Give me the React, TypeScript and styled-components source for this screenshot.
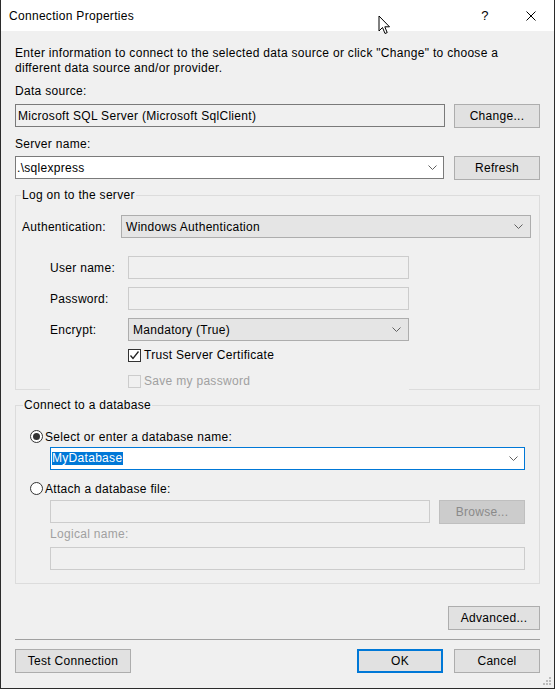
import styled, { createGlobalStyle } from "styled-components";

const font = `"Liberation Sans", Arial, sans-serif`;

const GlobalStyle = createGlobalStyle`
  html, body {
    margin: 0;
    padding: 0;
    background: #f0f0f0;
  }
  * {
    box-sizing: border-box;
  }
`;

const Window = styled.div`
  position: relative;
  width: 555px;
  height: 689px;
  display: flex;
  flex-direction: column;
  border: 1px solid #2b2b2b;
  border-top: 0;
  background: #f0f0f0;
  font-family: ${font};
  font-size: 12px;
  letter-spacing: 0.3px;
  color: #000;
  overflow: hidden;
`;

const TitleBar = styled.div`
  height: 31px;
  flex: none;
  display: flex;
  align-items: center;
  background: #fff;
`;

const Title = styled.div`
  flex: 1;
  padding-left: 8px;
  font-size: 12px;
`;

const TitleButton = styled.div`
  width: 46px;
  height: 31px;
  display: flex;
  align-items: center;
  justify-content: center;
  font-size: 13px;
`;

const Body = styled.div`
  flex: 1;
  display: flex;
  flex-direction: column;
  padding: 0 14px;
`;

const Intro = styled.p`
  margin: 15px 0 0;
  line-height: 15px;
`;

const Label = styled.div<{ $mt?: number; $disabled?: boolean }>`
  margin-top: ${(p) => p.$mt ?? 0}px;
  line-height: 15px;
  color: ${(p) => (p.$disabled ? "#a0a0a0" : "#000")};
`;

const Row = styled.div<{ $mt?: number; $gap?: number }>`
  display: flex;
  align-items: flex-start;
  gap: ${(p) => p.$gap ?? 9}px;
  margin-top: ${(p) => p.$mt ?? 0}px;
`;

const Box = styled.div<{ $bg?: string; $border?: string; $w?: number; $pl?: number }>`
  position: relative;
  height: 23px;
  ${(p) => (p.$w ? `width: ${p.$w}px; flex: none;` : "flex: 1;")}
  display: flex;
  align-items: center;
  padding-left: ${(p) => p.$pl ?? 2}px;
  background: ${(p) => p.$bg ?? "#fff"};
  border: 1px solid ${(p) => p.$border ?? "#7a7a7a"};
  white-space: nowrap;
`;

const ChevronSlot = styled.span<{ $right: number }>`
  position: absolute;
  right: ${(p) => p.$right}px;
  top: 8px;
  display: flex;
`;

const Selected = styled.span`
  background: #0078d7;
  color: #fff;
  line-height: 13px;
  padding: 0 1px 0 0;
`;

const Button = styled.button<{ $w: number; $primary?: boolean }>`
  width: ${(p) => p.$w}px;
  height: 24px;
  flex: none;
  padding: 0;
  font-family: ${font};
  font-size: 12px;
  letter-spacing: 0.3px;
  color: #000;
  background: #e1e1e1;
  border: ${(p) => (p.$primary ? "2px solid #0078d7" : "1px solid #adadad")};
  &:disabled {
    background: #cccccc;
    border-color: #bfbfbf;
    color: #8a8a8a;
  }
`;

const Group = styled.fieldset<{ $mt: number; $pb?: number }>`
  margin: ${(p) => p.$mt}px 0 0;
  padding: 0 0 ${(p) => p.$pb ?? 0}px;
  border: 1px solid #dcdcdc;
  min-width: 0;
`;

const Legend = styled.legend<{ $indent: number }>`
  margin-left: ${(p) => p.$indent}px;
  padding: 0 1px;
  line-height: 15px;
`;

const AuthRow = styled.div`
  display: flex;
  align-items: center;
  margin-top: 12px;
  padding: 0 8px 0 6px;
`;

const AuthLabel = styled.div`
  width: 99px;
  flex: none;
`;

const CredPanel = styled.div`
  position: relative;
  z-index: 1;
  width: 359px;
  margin: 18px 0 -1px 34px;
  padding-bottom: 1px;
  background: #f0f0f0;
`;

const CredRow = styled.div`
  display: flex;
  align-items: center;
  height: 23px;
  & + & {
    margin-top: 8px;
  }
`;

const CredLabel = styled.div`
  width: 78px;
  flex: none;
`;

const CheckRow = styled.div<{ $mt: number; $disabled?: boolean }>`
  display: flex;
  align-items: center;
  gap: 3px;
  margin: ${(p) => p.$mt}px 0 0 78px;
  line-height: 15px;
  color: ${(p) => (p.$disabled ? "#a0a0a0" : "#000")};
`;

const CheckBox = styled.span<{ $disabled?: boolean }>`
  width: 13px;
  height: 13px;
  flex: none;
  display: flex;
  align-items: center;
  justify-content: center;
  border: 1px solid ${(p) => (p.$disabled ? "#cccccc" : "#333")};
  background: ${(p) => (p.$disabled ? "#f0f0f0" : "#fff")};
`;

const RadioRow = styled.div<{ $mt: number }>`
  display: flex;
  align-items: center;
  gap: 2px;
  margin: ${(p) => p.$mt}px 0 0 14px;
  line-height: 15px;
`;

const Radio = styled.span<{ $checked?: boolean }>`
  width: 13px;
  height: 13px;
  flex: none;
  margin-top: -2px;
  border-radius: 50%;
  border: 1px solid #333;
  background: #fff;
  display: flex;
  align-items: center;
  justify-content: center;
  &::after {
    content: "";
    display: ${(p) => (p.$checked ? "block" : "none")};
    width: 7px;
    height: 7px;
    border-radius: 50%;
    background: #333;
  }
`;

const Indented = styled.div<{ $mt: number }>`
  margin: ${(p) => p.$mt}px 14px 0 34px;
`;

const RightRow = styled.div`
  display: flex;
  justify-content: flex-end;
  margin-top: 22px;
`;

const Separator = styled.div`
  height: 1px;
  margin-top: 9px;
  background: #a0a0a0;
`;

const ButtonBar = styled.div`
  display: flex;
  align-items: center;
  margin-top: 9px;
  & > :first-child {
    margin-right: auto;
  }
  gap: 11px;
`;

const Cursor = styled.svg`
  position: absolute;
  left: 377px;
  top: 15px;
`;

const Grip = styled.svg`
  position: absolute;
  right: 2px;
  bottom: 2px;
`;

function Chevron() {
  return (
    <svg width="9" height="5" viewBox="0 0 9 5">
      <path d="M0.5 0.5 L4.5 4.5 L8.5 0.5" fill="none" stroke="#606060" strokeWidth="1" />
    </svg>
  );
}

function CheckMark() {
  return (
    <svg width="11" height="11" viewBox="0 0 11 11">
      <path d="M1.5 5.5 L4 8.5 L9.5 1.5" fill="none" stroke="#222" strokeWidth="1.3" />
    </svg>
  );
}

export default function App() {
  return (
    <>
      <GlobalStyle />
      <Window>
        <TitleBar>
          <Title>Connection Properties</Title>
          <TitleButton>?</TitleButton>
          <TitleButton>
            <svg width="10" height="10" viewBox="0 0 10 10">
              <path d="M0.5 0.5 L9.5 9.5 M9.5 0.5 L0.5 9.5" stroke="#000" strokeWidth="1" />
            </svg>
          </TitleButton>
        </TitleBar>

        <Body>
          <Intro>
            Enter information to connect to the selected data source or click "Change" to choose a
            different data source and/or provider.
          </Intro>

          <Label $mt={8}>Data source:</Label>
          <Row $mt={5}>
            <Box $bg="#f0f0f0">Microsoft SQL Server (Microsoft SqlClient)</Box>
            <Button $w={86}>Change...</Button>
          </Row>

          <Label $mt={9}>Server name:</Label>
          <Row $mt={4} $gap={10}>
            <Box $pl={1}>
              .\sqlexpress
              <ChevronSlot $right={6}>
                <Chevron />
              </ChevronSlot>
            </Box>
            <Button $w={86}>Refresh</Button>
          </Row>

          <Group $mt={8}>
            <Legend $indent={5}>Log on to the server</Legend>
            <AuthRow>
              <AuthLabel>Authentication:</AuthLabel>
              <Box $bg="#e5e5e5" $border="#adadad" $pl={4}>
                Windows Authentication
                <ChevronSlot $right={7}>
                  <Chevron />
                </ChevronSlot>
              </Box>
            </AuthRow>

            <CredPanel>
              <CredRow>
                <CredLabel>User name:</CredLabel>
                <Box $w={281} $bg="#f0f0f0" $border="#cccccc" />
              </CredRow>
              <CredRow>
                <CredLabel>Password:</CredLabel>
                <Box $w={281} $bg="#f0f0f0" $border="#cccccc" />
              </CredRow>
              <CredRow>
                <CredLabel>Encrypt:</CredLabel>
                <Box $w={281} $bg="#e5e5e5" $border="#adadad" $pl={4}>
                  Mandatory (True)
                  <ChevronSlot $right={7}>
                    <Chevron />
                  </ChevronSlot>
                </Box>
              </CredRow>
              <CheckRow $mt={7}>
                <CheckBox>
                  <CheckMark />
                </CheckBox>
                Trust Server Certificate
              </CheckRow>
              <CheckRow $mt={11} $disabled>
                <CheckBox $disabled />
                Save my password
              </CheckRow>
            </CredPanel>
          </Group>

          <Group $mt={8} $pb={13}>
            <Legend $indent={7}>Connect to a database</Legend>
            <RadioRow $mt={17}>
              <Radio $checked />
              Select or enter a database name:
            </RadioRow>
            <Indented $mt={2}>
              <Box $border="#0078d7" $pl={1}>
                <Selected>MyDatabase</Selected>
                <ChevronSlot $right={6}>
                  <Chevron />
                </ChevronSlot>
              </Box>
            </Indented>
            <RadioRow $mt={12}>
              <Radio />
              Attach a database file:
            </RadioRow>
            <Indented $mt={3}>
              <Row>
                <Box $bg="#f0f0f0" $border="#cccccc" />
                <Button $w={86} disabled>
                  Browse...
                </Button>
              </Row>
            </Indented>
            <Indented $mt={3}>
              <Label $disabled>Logical name:</Label>
            </Indented>
            <Indented $mt={5}>
              <Row>
                <Box $bg="#f0f0f0" $border="#cccccc" />
              </Row>
            </Indented>
          </Group>

          <RightRow>
            <Button $w={92}>Advanced...</Button>
          </RightRow>
          <Separator />
          <ButtonBar>
            <Button $w={116}>Test Connection</Button>
            <Button $w={86} $primary>
              OK
            </Button>
            <Button $w={86}>Cancel</Button>
          </ButtonBar>
        </Body>

        <Cursor width="13" height="20" viewBox="0 0 13 20">
          <path
            d="M1 1 L1 16 L4.5 12.5 L7 18.5 L9.2 17.6 L6.8 11.8 L11.5 11.8 Z"
            fill="#fff"
            stroke="#000"
            strokeWidth="1"
            strokeLinejoin="miter"
          />
        </Cursor>
        <Grip width="10" height="10" viewBox="0 0 10 10">
          <rect x="7" y="1" width="2" height="2" fill="#bcbcbc" />
          <rect x="4" y="4" width="2" height="2" fill="#bcbcbc" />
          <rect x="7" y="4" width="2" height="2" fill="#bcbcbc" />
          <rect x="1" y="7" width="2" height="2" fill="#bcbcbc" />
          <rect x="4" y="7" width="2" height="2" fill="#bcbcbc" />
          <rect x="7" y="7" width="2" height="2" fill="#bcbcbc" />
        </Grip>
      </Window>
    </>
  );
}
